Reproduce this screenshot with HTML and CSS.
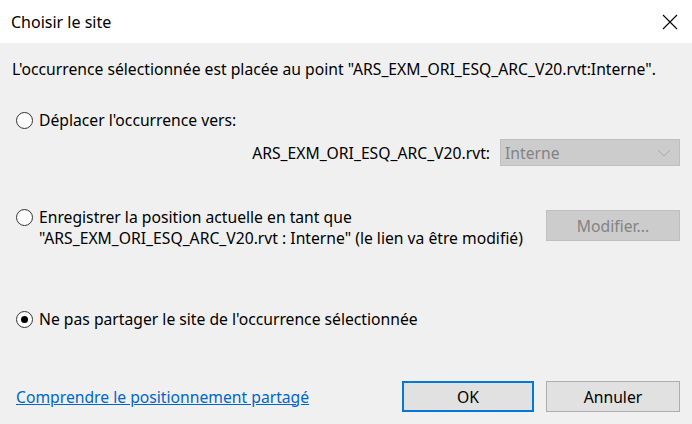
FILE: index.html
```html
<!DOCTYPE html>
<html lang="fr">
<head>
<meta charset="utf-8">
<link rel="stylesheet" href="styles.css">
</head>
<body>
<div class="dialog">
  <div class="titlebar">
    <span class="title">Choisir le site</span>
    <svg class="close" width="16" height="16" viewBox="0 0 16 16"><path d="M1 1 L15 15 M15 1 L1 15" stroke="#000" stroke-width="1.1" fill="none"/></svg>
  </div>
  <div class="content">
    <p class="intro">L'occurrence sélectionnée est placée au point "ARS_EXM_ORI_ESQ_ARC_V20.rvt:Interne".</p>

    <div class="option opt1">
      <span class="radio"></span>
      <span class="label">Déplacer l'occurrence vers:</span>
    </div>
    <div class="site-row">
      <span class="site-label">ARS_EXM_ORI_ESQ_ARC_V20.rvt:</span>
      <div class="select">
        <span>Interne</span>
        <svg width="14" height="8" viewBox="0 0 14 8"><path d="M1 1 L7 7 L13 1" stroke="#a8a8a8" stroke-width="1" fill="none"/></svg>
      </div>
    </div>

    <div class="option opt2">
      <span class="radio"></span>
      <span class="label">Enregistrer la position actuelle en tant que<br>"ARS_EXM_ORI_ESQ_ARC_V20.rvt : Interne" (le lien va être modifié)</span>
      <button class="btn disabled modifier">Modifier...</button>
    </div>

    <div class="option opt3">
      <span class="radio checked"></span>
      <span class="label">Ne pas partager le site de l'occurrence sélectionnée</span>
    </div>

    <div class="footer">
      <a class="link" href="#">Comprendre le positionnement partagé</a>
      <div class="buttons">
        <button class="btn primary">OK</button>
        <button class="btn">Annuler</button>
      </div>
    </div>
  </div>
</div>
</body>
</html>
```
FILE: styles.css
```css
html, body {
  margin: 0;
  padding: 0;
  background: #f0f0f0;
}
body {
  font-family: "Noto Sans", "Open Sans", sans-serif;
  font-size: 15.7px;
  color: #000;
}
.dialog {
  width: 692px;
  height: 424px;
  display: flex;
  flex-direction: column;
}
.titlebar {
  height: 43px;
  background: #fff;
  display: flex;
  align-items: center;
  justify-content: space-between;
  padding: 0 14px 0 11px;
  flex: none;
}
.title {
  font-size: 16px;
}
.close {
  display: block;
}
.content {
  flex: 1;
  display: flex;
  flex-direction: column;
  padding: 0 12px 0 16px;
}
.intro {
  margin: 16px 0 0 -4px;
  line-height: 20px;
}
.option {
  display: flex;
  align-items: flex-start;
}
.radio {
  width: 15px;
  height: 15px;
  border: 1px solid #333;
  border-radius: 50%;
  background: #fff;
  box-sizing: content-box;
  flex: none;
  margin-right: 6px;
  position: relative;
}
.radio.checked::after {
  content: "";
  position: absolute;
  left: 4px;
  top: 4px;
  width: 7px;
  height: 7px;
  border-radius: 50%;
  background: #000;
}
.label {
  line-height: 21px;
}
.option .radio {
  margin-top: 2px;
}
.opt1 {
  margin-top: 31px;
}
.site-row {
  display: flex;
  justify-content: flex-end;
  align-items: center;
  margin-top: 8px;
}
.site-label {
  margin-right: 10px;
}
.select {
  height: 27px;
  background: #cccccc;
  border: 1px solid #bfbfbf;
  color: #838383;
  display: flex;
  align-items: center;
  justify-content: space-between;
  padding: 0 8px 0 4px;
  box-sizing: border-box;
  width: 180px;
}
.opt2 {
  margin-top: 41px;
}
.opt2 .label {
  flex: 1;
}
.btn {
  font-family: inherit;
  font-size: 15.7px;
  width: 134px;
  height: 31px;
  border: 1px solid #adadad;
  background: #e1e1e1;
  color: #000;
  padding: 0;
  box-sizing: border-box;
}
.btn.disabled {
  background: #cccccc;
  border-color: #bfbfbf;
  color: #838383;
}
.modifier {
  margin-top: 3px;
}
.opt3 {
  margin-top: 60px;
}
.footer {
  display: flex;
  justify-content: space-between;
  align-items: center;
  margin-top: auto;
  margin-bottom: 12px;
}
.link {
  color: #0066cc;
  text-decoration: underline;
}
.buttons {
  display: flex;
  gap: 12px;
}
.btn.primary {
  border: 2px solid #0078d7;
  width: 132px;
}
```
